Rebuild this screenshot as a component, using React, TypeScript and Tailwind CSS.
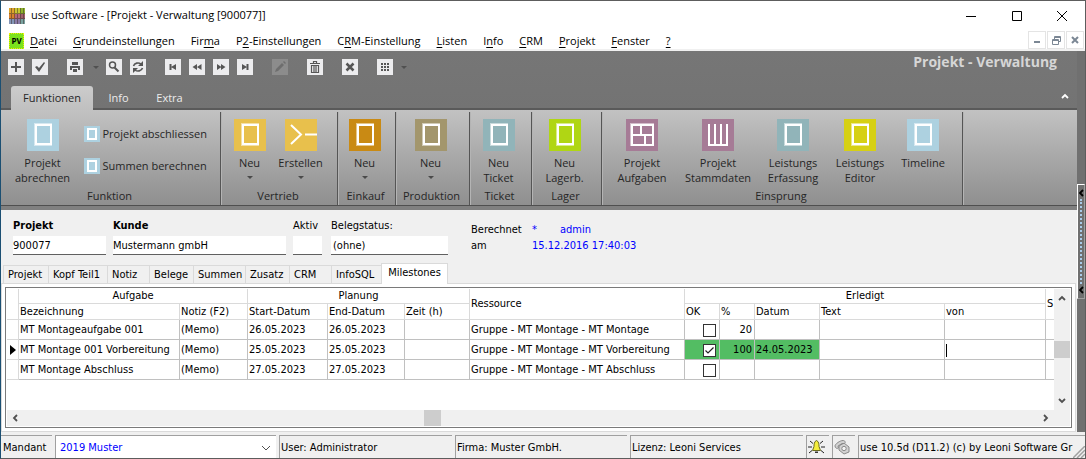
import React from 'react';
import clsx from 'clsx';

const menu = [
    ['', 'D', 'atei'],
    ['', 'G', 'rundeinstellungen'],
    ['Fir', 'm', 'a'],
    ['P', '2', '-Einstellungen'],
    ['C', 'R', 'M-Einstellung'],
    ['', 'L', 'isten'],
    ['I', 'n', 'fo'],
    ['', 'C', 'RM'],
    ['', 'P', 'rojekt'],
    ['', 'F', 'enster'],
    ['', '?', ''],
];

const pageTabs = [
    { label: 'Projekt', width: 'w-[45px]' },
    { label: 'Kopf Teil1', width: 'w-[59px]' },
    { label: 'Notiz', width: 'w-[42px]' },
    { label: 'Belege', width: 'w-[44px]' },
    { label: 'Summen', width: 'w-[52px]' },
    { label: 'Zusatz', width: 'w-[44px]' },
    { label: 'CRM', width: 'w-[42px]' },
    { label: 'InfoSQL', width: 'w-[50px]' },
];

const rows = [
    { name: 'MT Montageaufgabe 001', start: '26.05.2023', end: '26.05.2023', res: 'Gruppe - MT Montage - MT Montage', ok: false, percent: '20', date: '' },
    { name: 'MT Montage 001 Vorbereitung', start: '25.05.2023', end: '25.05.2023', res: 'Gruppe - MT Montage - MT Vorbereitung', ok: true, percent: '100', date: '24.05.2023' },
    { name: 'MT Montage Abschluss', start: '27.05.2023', end: '27.05.2023', res: 'Gruppe - MT Montage - MT Abschluss', ok: false, percent: '', date: '' },
];

/* ---------- Icons ---------- */

function AppIcon() {
    return (
        <svg width="16" height="16" viewBox="0 0 16 16" shapeRendering="crispEdges">
            <rect width="6" height="6" fill="#e0a52c" />
            <rect x="6" width="5" height="6" fill="#c9c832" />
            <rect x="11" width="5" height="6" fill="#8fb52c" />
            <rect y="6" width="6" height="5" fill="#d9822c" />
            <rect x="6" y="6" width="5" height="5" fill="#b5677a" />
            <rect x="11" y="6" width="5" height="5" fill="#a0606c" />
            <rect y="11" width="6" height="5" fill="#8496b8" />
            <rect x="6" y="11" width="5" height="5" fill="#8a7ba8" />
            <rect x="11" y="11" width="5" height="5" fill="#7aa3a0" />
            <path d="M2.5 0v16M5.5 0v16M8.5 0v16M11.5 0v16M14.5 0v16M0 5.5h16M0 10.5h16" stroke="#3c2c2c" strokeOpacity="0.5" />
        </svg>
    );
}

function ToolButton({ label, disabled, className, children }: { label: string; disabled?: boolean; className?: string; children: React.ReactNode }) {
    return (
        <button aria-label={label} disabled={disabled} className={clsx('h-4 w-4 shrink-0', disabled ? 'bg-[#8c8c8c] text-[#6e6e6e]' : 'bg-[#ececee] text-[#565656]', className)}>
            <svg width="16" height="16" viewBox="0 0 16 16" fill="currentColor">
                {children}
            </svg>
        </button>
    );
}

function DropArrow({ className }: { className?: string }) {
    return (
        <svg width="6" height="3" viewBox="0 0 6 3" className={className}>
            <path d="M0 0h6L3 3z" fill="currentColor" />
        </svg>
    );
}

function Chevron({ dir, className }: { dir: 'up' | 'down' | 'left' | 'right'; className?: string }) {
    const d = {
        up: 'M1 6l3-3 3 3',
        down: 'M1 2l3 3 3-3',
        left: 'M6 1L3 4l3 3',
        right: 'M2 1l3 3-3 3',
    }[dir];
    return (
        <svg width="8" height="8" viewBox="0 0 8 8" fill="none" stroke="currentColor" strokeWidth="1.8" className={className}>
            <path d={d} />
        </svg>
    );
}

type Glyph = 'doc' | 'prompt' | 'bricks' | 'bars';

function RibbonIcon({ glyph = 'doc', color }: { glyph?: Glyph; color: string }) {
    return (
        <svg width="32" height="32" viewBox="0 0 32 32" fill="none" className={clsx('shrink-0', color)}>
            {glyph === 'doc' && (
                <>
                    <rect x="7.5" y="4.5" width="17" height="22" stroke="#fff" strokeOpacity="0.5" />
                    <rect x="9" y="6" width="15" height="19" stroke="#fff" strokeWidth="2" />
                </>
            )}
            {glyph === 'prompt' && <path d="M6 6l10 9.5L6 25M20 15.5h12" stroke="#fff" strokeWidth="2" />}
            {glyph === 'bricks' && (
                <>
                    <rect x="4.5" y="4.5" width="23" height="22" stroke="#fff" strokeOpacity="0.5" />
                    <path d="M6 6h21v20H6zM6 16h21M15 6v10M19 16v10" stroke="#fff" strokeWidth="2" />
                </>
            )}
            {glyph === 'bars' && <path d="M7 5v20M13 5v20M19 5v20M25 5v20M6 26h20" stroke="#fff" strokeWidth="2" />}
        </svg>
    );
}

/* ---------- Ribbon ---------- */

function RibbonButton({ lines, color, glyph, drop, width }: { lines: string[]; color: string; glyph?: Glyph; drop?: boolean; width?: string }) {
    return (
        <button className={clsx('flex flex-col items-center', width)}>
            <RibbonIcon glyph={glyph} color={color} />
            <span className="mt-1 leading-[15px]">
                {lines.map((line) => (
                    <span key={line} className="block whitespace-nowrap">{line}</span>
                ))}
            </span>
            {drop && <DropArrow className="mt-[6px] text-[#4a4a4a]" />}
        </button>
    );
}

function SmallRibbonButton({ label }: { label: string }) {
    return (
        <button className="flex h-4 items-center gap-[3px] leading-4 whitespace-nowrap">
            <svg width="16" height="16" viewBox="0 0 16 16" className="bg-[#add1e0]">
                <rect x="4" y="3" width="8" height="10" fill="none" stroke="#fff" strokeWidth="2" />
            </svg>
            {label}
        </button>
    );
}

function RibbonGroup({ title, width, children }: { title: string; width: string; children: React.ReactNode }) {
    return (
        <section aria-label={title} className={clsx('mt-[2px] flex shrink-0 flex-col border-r border-[#555] pt-[7px] shadow-[1px_0_0_#b4b4b4]', width)}>
            <div className="flex h-[69px] justify-center pr-1">{children}</div>
            <div className="pr-[2px] text-center leading-[15px]">{title}</div>
        </section>
    );
}

function Ribbon() {
    return (
        <div className="flex h-24 overflow-hidden border-b border-[#4f4f4f] bg-linear-to-b from-[#c2c2c2] to-[#8f8f8f] text-[#262626]">
            <RibbonGroup title="Funktion" width="w-[220px]">
                <RibbonButton lines={['Projekt', 'abrechnen']} color="bg-[#add1e0]" width="w-[82px]" />
                <div className="flex w-[132px] flex-col gap-4 pt-[7px]">
                    <SmallRibbonButton label="Projekt abschliessen" />
                    <SmallRibbonButton label="Summen berechnen" />
                </div>
            </RibbonGroup>
            <RibbonGroup title="Vertrieb" width="w-[117px]">
                <div className="flex pr-1">
                    <RibbonButton lines={['Neu']} color="bg-[#e8c04c]" drop width="w-[51px]" />
                    <RibbonButton lines={['Erstellen']} color="bg-[#e8c04c]" glyph="prompt" drop width="w-[51px]" />
                </div>
            </RibbonGroup>
            <RibbonGroup title="Einkauf" width="w-[58px]">
                <RibbonButton lines={['Neu']} color="bg-[#c98a14]" drop />
            </RibbonGroup>
            <RibbonGroup title="Produktion" width="w-[74px]">
                <RibbonButton lines={['Neu']} color="bg-[#a3966c]" drop />
            </RibbonGroup>
            <RibbonGroup title="Ticket" width="w-[62px]">
                <RibbonButton lines={['Neu', 'Ticket']} color="bg-[#91b4b9]" />
            </RibbonGroup>
            <RibbonGroup title="Lager" width="w-[70px]">
                <RibbonButton lines={['Neu', 'Lagerb.']} color="bg-[#b0d614]" />
            </RibbonGroup>
            <RibbonGroup title="Einsprung" width="w-[361px]">
                <RibbonButton lines={['Projekt', 'Aufgaben']} color="bg-[#a67b96]" glyph="bricks" width="w-[76px]" />
                <RibbonButton lines={['Projekt', 'Stammdaten']} color="bg-[#a67b96]" glyph="bars" width="w-[76px]" />
                <RibbonButton lines={['Leistungs', 'Erfassung']} color="bg-[#91b4b9]" width="w-[74px]" />
                <RibbonButton lines={['Leistungs', 'Editor']} color="bg-[#d6d014]" width="w-[60px]" />
                <RibbonButton lines={['Timeline']} color="bg-[#add1e0]" width="w-[66px]" />
            </RibbonGroup>
        </div>
    );
}

function Toolbar() {
    return (
        <div className="flex h-[34px] items-start pt-2 pl-[7px]">
            <ToolButton label="Neu"><path d="M7 3h2v4h4v2H9v4H7V9H3V7h4z" /></ToolButton>
            <ToolButton label="Speichern" className="ml-2"><path d="M3 8l2-1 2 2 5-6 1 1-6 9z" /></ToolButton>
            <ToolButton label="Drucken" className="ml-[19px]"><path d="M5 3h6v3H5zM3 7h10v4h-2V9H5v2H3zM6 10h4v3H6z" /></ToolButton>
            <DropArrow className="mt-[7px] ml-[10px] text-[#505050]" />
            <ToolButton label="Suchen" className="ml-[7px]">
                <circle cx="6.5" cy="6" r="3" fill="none" stroke="currentColor" strokeWidth="1.5" />
                <path d="M8.5 8.5l4 4" stroke="currentColor" strokeWidth="2" />
            </ToolButton>
            <ToolButton label="Aktualisieren" className="ml-2">
                <path d="M3.5 7c1-3 5-4 7.5-2M12.5 9c-1 3-5 4-7.5 2" fill="none" stroke="currentColor" strokeWidth="1.6" />
                <path d="M13 2v5H8zM3 14V9h5z" />
            </ToolButton>
            <ToolButton label="Erster" className="ml-[19px]"><path d="M4.500 5h2v6h-2zM11 5v6L6 8z" /></ToolButton>
            <ToolButton label="Zurück" className="ml-2"><path d="M8 5v6L3.500 8zM12.500 5v6L8 8z" /></ToolButton>
            <ToolButton label="Vor" className="ml-2"><path d="M4 5v6l4.500-3zM8 5v6l4.500-3z" /></ToolButton>
            <ToolButton label="Letzter" className="ml-2"><path d="M9.500 5h2v6h-2zM5 5v6l5-3z" /></ToolButton>
            <ToolButton label="Bearbeiten" disabled className="ml-[19px]"><path d="M3 13l1-3 6-6 2 2-6 6zM11 3l1-1 2 2-1 1z" /></ToolButton>
            <ToolButton label="Papierkorb" className="ml-[19px]">
                <path d="M3 4.5h10M6.5 4V2.5h3V4M4.5 6.5h7v7h-7zM7 7v6M9 7v6" fill="none" stroke="currentColor" strokeWidth="1.2" />
            </ToolButton>
            <ToolButton label="Abbrechen" className="ml-[19px]"><path d="M4.5 4.5l7 7M11.5 4.5l-7 7" stroke="currentColor" strokeWidth="2.5" /></ToolButton>
            <ToolButton label="Ansicht" className="ml-[19px]">
                <path d="M4 4h2v2H4zM7 4h2v2H7zM10 4h2v2h-2zM4 7h2v2H4zM7 7h2v2H7zM10 7h2v2h-2zM4 10h2v2H4zM7 10h2v2H7zM10 10h2v2h-2z" />
            </ToolButton>
            <DropArrow className="mt-[7px] ml-2 text-[#505050]" />
            <h1 className="-mt-2 mr-5 ml-auto text-sm leading-[22px] font-bold text-[#d6d6d6]">Projekt - Verwaltung</h1>
        </div>
    );
}

function RibbonTabs() {
    return (
        <div className="flex h-[25px] items-end border-b-2 border-[#5a5a5a] pt-[2px] pl-[10px] text-[#ececec]">
            <button className="-mb-[2px] h-[24px] w-[82px] rounded-t-[3px] bg-linear-to-b from-[#cccccc] to-[#c0c0c0] text-[#262626]">Funktionen</button>
            <button className="h-5 w-[51px]">Info</button>
            <button className="h-5 w-[51px]">Extra</button>
            <button aria-label="Menüband ausblenden" className="mr-2 mb-2 ml-auto text-white">
                <Chevron dir="up" />
            </button>
        </div>
    );
}

/* ---------- Form ---------- */

function Field({ id, label, value, width, bold }: { id: string; label: string; value: string; width: string; bold?: boolean }) {
    return (
        <div className={width}>
            <label htmlFor={id} className={clsx('block h-[17px] leading-[13px] whitespace-nowrap', bold && 'font-bold')}>{label}</label>
            <input id={id} defaultValue={value} className="block h-[19px] w-full border-b border-[#606060] bg-white outline-none" />
        </div>
    );
}

function ProjectForm() {
    return (
        <div className="flex h-[53px] items-start pt-[9px] pl-3">
            <Field id="projekt" label="Projekt" value="900077" width="w-[93px]" bold />
            <Field id="kunde" label="Kunde" value="Mustermann gmbH" width="ml-[7px] w-[173px]" bold />
            <Field id="aktiv" label="Aktiv" value="" width="ml-[7px] w-[29px]" />
            <Field id="belegstatus" label="Belegstatus:" value="(ohne)" width="ml-[9px] w-[117px] [&>input]:pl-[2px]" />
            <dl className="mt-[3px] ml-[23px] grid grid-cols-[61px_1fr] leading-4">
                <dt>Berechnet</dt>
                <dd className="flex text-[#0000ff]"><span className="w-[28px]">*</span><span>admin</span></dd>
                <dt>am</dt>
                <dd className="text-[#0000ff]">15.12.2016 17:40:03</dd>
            </dl>
        </div>
    );
}

function PageTabs() {
    return (
        <div className="flex items-end pl-[2px]">
            {pageTabs.map((tab) => (
                <button key={tab.label} className={clsx('h-[18px] border-t border-l border-[#dadada] pt-px pl-1 text-left whitespace-nowrap', tab.width)}>
                    {tab.label}
                </button>
            ))}
            <button className="relative -mb-px h-[21px] w-[67px] border border-b-0 border-[#dadada] bg-white pb-[2px] text-center">Milestones</button>
        </div>
    );
}

/* ---------- Milestone table ---------- */

const head = 'border-r border-b border-[#dadada] px-px font-normal leading-[14px] overflow-hidden whitespace-nowrap';
const headLeft = head + ' text-left';
const cell = 'border-r border-b border-[#c0c0c0] pt-px pr-[2px] pl-px overflow-hidden whitespace-nowrap';

function MilestoneTable() {
    return (
        <table className="w-full table-fixed border-separate border-spacing-0">
            <colgroup>
                <col className="w-[12px]" />
                <col className="w-[161px]" />
                <col className="w-[68px]" />
                <col className="w-[80px]" />
                <col className="w-[77px]" />
                <col className="w-[65px]" />
                <col className="w-[215px]" />
                <col className="w-[35px]" />
                <col className="w-[35px]" />
                <col className="w-[65px]" />
                <col className="w-[125px]" />
                <col className="w-[101px]" />
                <col />
            </colgroup>
            <thead>
                <tr className="h-[15px]">
                    <th rowSpan={2} className={head} />
                    <th colSpan={2} className={head}>Aufgabe</th>
                    <th colSpan={3} className={head}>Planung</th>
                    <th rowSpan={2} className={headLeft}>Ressource</th>
                    <th colSpan={5} className={head}>Erledigt</th>
                    <th rowSpan={2} className={clsx(headLeft, 'border-r-0')}>S</th>
                </tr>
                <tr className="h-4">
                    <th className={headLeft}>Bezeichnung</th>
                    <th className={headLeft}>Notiz (F2)</th>
                    <th className={headLeft}>Start-Datum</th>
                    <th className={headLeft}>End-Datum</th>
                    <th className={headLeft}>Zeit (h)</th>
                    <th className={headLeft}>OK</th>
                    <th className={headLeft}>%</th>
                    <th className={headLeft}>Datum</th>
                    <th className={headLeft}>Text</th>
                    <th className={headLeft}>von</th>
                </tr>
            </thead>
            <tbody>
                {rows.map((row) => (
                    <tr key={row.name} className="h-5">
                        <td className="border-r border-b border-[#dadada] pl-[3px]">
                            {row.ok && (
                                <svg width="6" height="10" viewBox="0 0 6 10" className="block"><path d="M0 0l6 5-6 5z" /></svg>
                            )}
                        </td>
                        <td className={cell}>{row.name}</td>
                        <td className={cell}>(Memo)</td>
                        <td className={cell}>{row.start}</td>
                        <td className={cell}>{row.end}</td>
                        <td className={cell} />
                        <td className={cell}>{row.res}</td>
                        <td className={clsx(cell, row.ok && 'bg-[#53bd63]')}>
                            <div className="relative mr-px ml-auto h-[13px] w-[13px]">
                                <input type="checkbox" aria-label={'OK ' + row.name} defaultChecked={row.ok} className="block h-[13px] w-[13px] appearance-none border border-[#333] bg-white" />
                                {row.ok && (
                                    <svg width="13" height="13" viewBox="0 0 13 13" className="pointer-events-none absolute top-0 left-0">
                                        <path d="M2.5 6.5L5 9l5.5-5.5" fill="none" stroke="#222" strokeWidth="1.2" />
                                    </svg>
                                )}
                            </div>
                        </td>
                        <td className={clsx(cell, 'text-right', row.ok && 'bg-[#53bd63]')}>{row.percent}</td>
                        <td className={clsx(cell, row.ok && 'bg-[#53bd63]')}>{row.date}</td>
                        <td className={cell} />
                        <td className={cell}>{row.ok && <div className="h-[13px] w-px bg-black" />}</td>
                        <td className={clsx(cell, 'border-r-0')} />
                    </tr>
                ))}
            </tbody>
        </table>
    );
}

function MilestonePane() {
    return (
        <div className="mr-px flex grow flex-col border border-[#dadada] bg-white p-[3px]">
            <div className="flex grow flex-col border border-[#7a7a7a] p-px">
                <div className="flex grow">
                    <div className="min-w-0 grow">
                        <MilestoneTable />
                    </div>
                    <div className="flex w-4 shrink-0 flex-col items-center justify-between bg-[#f0f0f0] py-[5px] text-[#505050]">
                        <Chevron dir="up" />
                        <div className="h-[17px] w-full bg-[#cdcdcd]" />
                        <Chevron dir="down" />
                    </div>
                </div>
                <div className="flex h-4 items-center bg-[#f0f0f0] pr-5 pl-1 text-[#505050]">
                    <Chevron dir="left" />
                    <div className="flex h-full grow">
                        <div className="w-[calc(40%-4px)]" />
                        <div className="h-full w-[17px] bg-[#cdcdcd]" />
                    </div>
                    <Chevron dir="right" />
                </div>
            </div>
        </div>
    );
}

/* ---------- Status bar ---------- */

const panel = 'h-[23px] shrink-0 overflow-hidden border-t border-l border-[#a0a0a0] pl-px leading-[23px] whitespace-nowrap';

function StatusBar() {
    return (
        <footer className="flex gap-[3px] overflow-hidden pt-[3px]">
            <label htmlFor="mandant" className="h-[23px] w-[51px] shrink-0 border-t border-[#a0a0a0] pl-[2px] leading-[23px]">Mandant</label>
            <div className={clsx(panel, 'relative w-[221px] bg-white')}>
                <select id="mandant" className="block h-full w-full appearance-none pl-[3px] text-[#0000ff] outline-none">
                    <option>2019 Muster</option>
                </select>
                <svg width="10" height="6" viewBox="0 0 10 6" className="pointer-events-none absolute top-[9px] right-[5px]">
                    <path d="M1 1l4 4 4-4" fill="none" stroke="#505050" />
                </svg>
            </div>
            <div className={clsx(panel, 'w-[173px]')}>User: Administrator</div>
            <div className={clsx(panel, 'w-[172px]')}>Firma: Muster GmbH.</div>
            <div className={clsx(panel, 'w-[173px]')}>Lizenz: Leoni Services</div>
            <div className={clsx(panel, 'w-[23px]')}>
                <svg width="17" height="16" viewBox="0 0 17 16" className="mt-[3px]">
                    <path d="M2 2l3 2.500M15 2l-3 2.500M0 8h4M13 8h4M1 14l3-2.500M16 14l-3-2.500" stroke="#222" />
                    <path d="M8.500 1.500c-2.500 1-2.500 4-2.500 6L4.500 11.500h8L11 7.500c0-2 0-5-2.500-6z" fill="#f4ee3c" stroke="#6b6b20" />
                    <path d="M7 12.500h3V14H7z" fill="#333" />
                </svg>
            </div>
            <div className={clsx(panel, 'w-[23px]')}>
                <svg width="17" height="16" viewBox="0 0 17 16" fill="#d2d2d2" stroke="#8a8a8a" className="mt-[3px]">
                    <path d="M5 7l5-3 5 4v5l-5 2-5-4z" />
                    <circle cx="10" cy="9.5" r="2.2" fill="#f4f4f4" />
                    <path d="M1 7c0-2 5-5.5 8-5.5 2 0 3 2 1.500 3L8 4.500 4 7l.5 2C3 10 1 9 1 7z" />
                </svg>
            </div>
            <div className={clsx(panel, 'relative w-0 grow')}>
                use 10.5d (D11.2) (c) by Leoni Software Gr
                <svg width="12" height="12" viewBox="0 0 12 12" className="absolute right-0 bottom-0">
                    <path d="M0 12L12 0M4 12l8-8M8 12l4-4" stroke="#a0a0a0" strokeWidth="1.5" />
                </svg>
            </div>
        </footer>
    );
}

/* ---------- Window ---------- */

function TitleBar() {
    return (
        <div className="flex h-[29px] items-center bg-white pl-2">
            <AppIcon />
            <span className="ml-[6px]">use Software - [Projekt - Verwaltung [900077]]</span>
            <div className="ml-auto flex">
                <button aria-label="Minimieren" className="flex h-[29px] w-[46px] items-center justify-center">
                    <svg width="10" height="10" viewBox="0 0 10 10"><path d="M0 5.5h10" stroke="#000" /></svg>
                </button>
                <button aria-label="Maximieren" className="flex h-[29px] w-[45px] items-center justify-center">
                    <svg width="10" height="10" viewBox="0 0 10 10"><path d="M.5.5h9v9h-9z" fill="none" stroke="#000" /></svg>
                </button>
                <button aria-label="Schliessen" className="flex h-[29px] w-[46px] items-center justify-center">
                    <svg width="10" height="10" viewBox="0 0 10 10"><path d="M0 0l10 10M10 0L0 10" stroke="#000" /></svg>
                </button>
            </div>
        </div>
    );
}

function MenuBar() {
    const mdi = 'flex h-[18px] w-[18px] items-center justify-center border border-[#e4e4e4]';
    return (
        <div className="flex h-[21px] items-end border-b-2 border-[#f0f0f0] bg-white pl-2">
            <span className="flex h-4 w-[15px] items-center justify-center border border-dotted border-[#f0f000] bg-[#7be21e] text-[8px] font-bold">PV</span>
            <nav className="ml-[6px] flex gap-4">
                {menu.map(([pre, key, post]) => (
                    <button key={pre + key + post}>
                        {pre}<span className="underline underline-offset-2">{key}</span>{post}
                    </button>
                ))}
            </nav>
            <div className="mr-px ml-auto flex gap-px">
                <button aria-label="Fenster minimieren" className={mdi}>
                    <svg width="8" height="8" viewBox="0 0 8 8"><path d="M1 6h6" stroke="#7b8794" strokeWidth="2" /></svg>
                </button>
                <button aria-label="Fenster wiederherstellen" className={mdi}>
                    <svg width="9" height="9" viewBox="0 0 9 9" fill="none" stroke="#7b8794"><path d="M2.5 3V.5h6v5H7M2 1.5h6M.5 3.5h6v5h-6zM0 4.5h7" /></svg>
                </button>
                <button aria-label="Fenster schliessen" className={mdi}>
                    <svg width="8" height="8" viewBox="0 0 8 8"><path d="M1 1l6 6M7 1L1 7" stroke="#7b8794" strokeWidth="2" /></svg>
                </button>
            </div>
        </div>
    );
}

function SideSplitter() {
    return (
        <div className="w-2 shrink-0 bg-[#707070] pt-[133px]">
            <button aria-label="Seitenleiste einblenden" className="flex h-[115px] w-2 flex-col items-center border border-r-[#a0a0a0] border-b-[#a0a0a0] border-white bg-[#707070] py-1 text-black">
                <Chevron dir="left" className="shrink-0" />
                <span className="my-[2px] w-0 grow border-l-2 border-dotted border-[#a9cbe8]" />
                <Chevron dir="left" className="shrink-0" />
            </button>
        </div>
    );
}

export default function App() {
    return (
        <div className="flex min-h-screen flex-col border border-[#5d5d5d] border-l-[#1b4f72] bg-[#f0f0f0] font-['DejaVu_Sans_Condensed','DejaVu_Sans',sans-serif] text-[11px] text-black">
            <header className="font-['Open_Sans',sans-serif]">
                <TitleBar />
                <MenuBar />
            </header>
            <div className="flex grow">
                <main className="flex min-w-0 grow flex-col">
                    <div className="bg-linear-to-b from-[#767676] to-[#6e6e6e] font-['Open_Sans',sans-serif]">
                        <Toolbar />
                        <RibbonTabs />
                        <Ribbon />
                        <div className="h-1 bg-[#808080]" />
                    </div>
                    <ProjectForm />
                    <PageTabs />
                    <MilestonePane />
                </main>
                <SideSplitter />
            </div>
            <StatusBar />
        </div>
    );
}
